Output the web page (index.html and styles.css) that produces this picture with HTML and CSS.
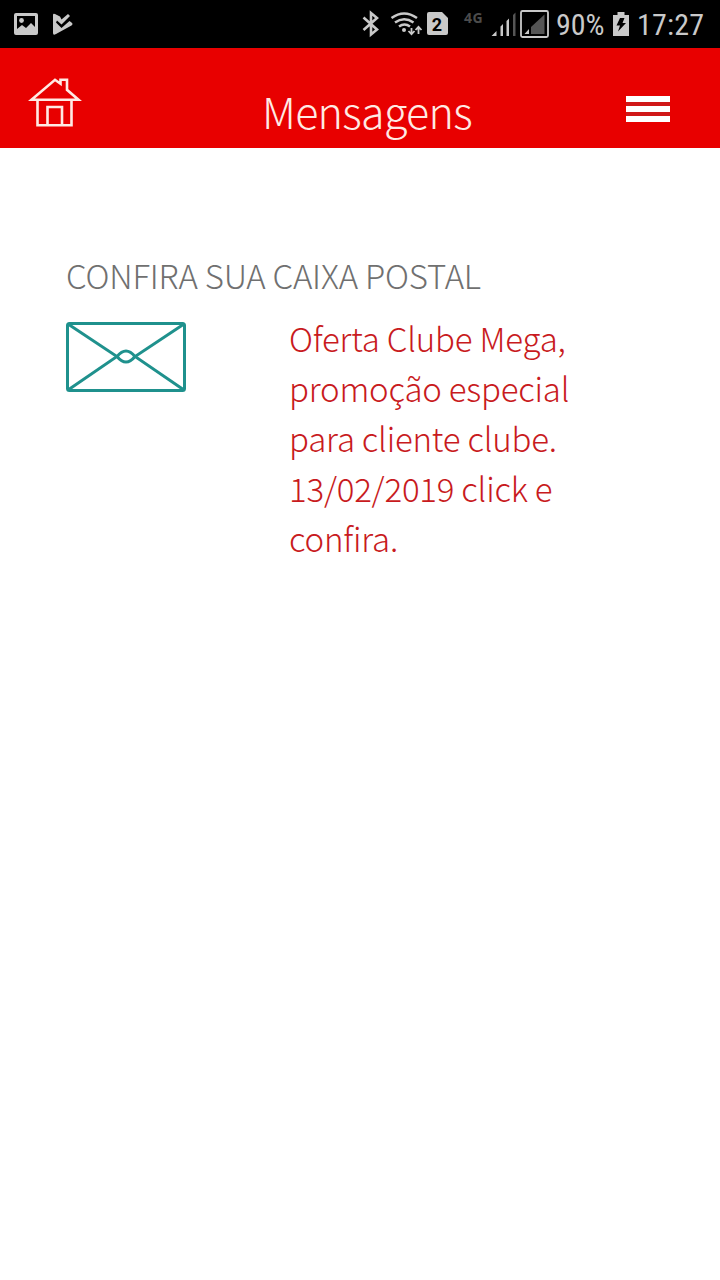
FILE: index.html
```html
<!DOCTYPE html>
<html lang="pt-BR">
<head>
    <meta charset="UTF-8" />
    <meta name="viewport" content="width=device-width, initial-scale=1.0" />
    <title>Mensagens</title>
    <link rel="stylesheet" href="styles.css">
</head>
<body>

<div class="status-bar">
    <svg class="status-left" width="80" height="48" viewBox="0 0 80 48">
        <path fill="#c9c9c9" fill-rule="evenodd" d="M16 13h20q2 0 2 2v18q0 2-2 2H16q-2 0-2-2V15q0-2 2-2zM17 16v13l5-4 4 3 5-5 4 4V16z" />
        <circle cx="21.5" cy="20.5" r="2.4" fill="#c9c9c9" />
        <path fill="#c9c9c9" d="M53 15q0-2 2-1l5 2.500 1.500 3L68 14l2 2-8.500 8.500-4.500-4-1 2 5.500 5.500 8-7 2 1.500q2 1.500 0 3L56 34q-3 2-3-1z" />
    </svg>
    <svg class="status-radio" width="90" height="48" viewBox="360 0 90 48">
        <path fill="none" stroke="#c9c9c9" stroke-width="2.600" d="M363.500 17.500l13.500 12-6 5V13l6 5-13.500 12" />
        <g fill="none" stroke="#c9c9c9" stroke-width="2.500">
            <path d="M391.500 18q12.500-9 25.500 0M395 22.500q9-6.500 18.500 0M399 26.500q5.500-4 11 0" />
            <path stroke-width="1.800" d="M411.500 28v6m-3-3l3 3.200 3-3.200M418.500 34v-7m-3 3l3-3.200 3 3.200" />
        </g>
        <circle cx="404" cy="30" r="2" fill="#c9c9c9" />
        <path fill="#c9c9c9" d="M429 12h13l6 6v15q0 2-2 2h-17q-2 0-2-2V14q0-2 2-2z" />
        <text class="sim-number" x="437" y="31" text-anchor="middle">2</text>
    </svg>
    <span class="network">4G</span>
    <svg class="status-signal" width="60" height="48" viewBox="490 0 60 48">
        <path fill="#c9c9c9" d="M491.500 36l5-5v5zM500.500 26.500l2.500-2.500v12h-2.500zM506.500 21l2.500-2.500V36h-2.500z" />
        <path fill="#555" d="M513 15l2.500-2.500V36H513z" />
        <rect x="521" y="11" width="27" height="26" rx="1.500" fill="none" stroke="#c9c9c9" stroke-width="1.800" />
        <path fill="#555" d="M544.500 14.500V34H531v-7z" />
        <path fill="#c9c9c9" d="M524.500 34l4.500-5v5z" />
    </svg>
    <span class="battery-level">90%</span>
    <svg class="battery" width="16" height="48" viewBox="613 0 16 48">
        <path fill="#c9c9c9" d="M617.500 12h7v3h4.500v21h-16V15h4.500z" />
        <path fill="#000" d="M620 18h4.500l-2 5h3.500l-8 8.500 2-6H616.500z" />
    </svg>
    <span class="clock">17:27</span>
</div>

<div class="header">
    <svg class="home" width="54" height="54" viewBox="0 0 54 54" fill="none" stroke="#ffeae4" stroke-width="2.600">
        <path d="M3.500 21.800L27 1.800l5.500 4V1.800H39v10L50.500 21.800zM9.500 22.500v24.800h34V22.500M19.500 47V29h14.500v18" />
    </svg>
    <h1>Mensagens</h1>
    <div class="menu">
        <span></span>
        <span></span>
        <span></span>
    </div>
</div>

<div class="content">
    <h2>CONFIRA SUA CAIXA POSTAL</h2>
    <div class="message">
        <svg class="envelope" width="120" height="70" viewBox="0 0 120 70" fill="none" stroke="#1f918d" stroke-width="3">
            <rect x="1.500" y="1.500" width="117" height="67" rx="2" />
            <path d="M2 2l49 32.500q9 11 18 0L118 2M2 68l49-33.500q9-11 18 0l49 33.500" />
        </svg>
        <p>Oferta Clube Mega, promoção especial para cliente clube. 13/02/2019 click e confira.</p>
    </div>
</div>

</body>
</html>
```

FILE: styles.css
```css
body {
    font-family: 'Noto Sans CJK SC', 'Open Sans', sans-serif;
    font-weight: 300;
    background: #ffffff;
    margin: 0;
}

svg {
    display: block;
    flex: none;
}

/* Status Bar */
.status-bar {
    display: flex;
    height: 48px;
    background: #000000;
    color: #c9c9c9;
    font-family: Roboto, sans-serif;
    font-weight: 400;
    line-height: 50px;
    white-space: nowrap;
}

.status-radio {
    margin-left: 280px;
}

.sim-number {
    font: bold 18px Roboto, sans-serif;
    fill: #000000;
}

.network {
    width: 26px;
    margin-left: 14px;
    color: #4c4c4c;
    font: bold 14px/35px 'Noto Sans', sans-serif;
    letter-spacing: 0.5px;
}

.battery-level {
    width: 57px;
    margin-left: 6px;
    font-size: 30px;
    font-stretch: 85%;
}

.clock {
    margin-left: 8px;
    font-size: 30px;
    font-stretch: 85%;
    letter-spacing: 0.2px;
}

/* Header */
.header {
    display: flex;
    height: 100px;
    background: #e80000;
}

.home {
    margin: 30px 0 0 28px;
}

h1 {
    width: 364px;
    margin: 14px 0 0 180px;
    color: #ffeae4;
    font-size: 43px;
    font-weight: 300;
    letter-spacing: -0.7px;
    line-height: 96px;
}

.menu {
    display: flex;
    flex-direction: column;
    align-self: flex-start;
    gap: 4px;
    width: 44px;
    margin-top: 48px;
    background: #d01818;
}

.menu span {
    height: 6px;
    background: #ffffff;
}

/* Messages */
.content {
    padding: 102px 66px 0;
}

h2 {
    margin: 0;
    color: #707070;
    font-size: 33px;
    font-weight: 300;
    letter-spacing: -0.2px;
    line-height: 50px;
}

.message {
    display: flex;
    margin-top: 13px;
}

.envelope {
    margin-top: 9px;
}

p {
    width: 300px;
    margin: 0 0 0 103px;
    color: #c81a20;
    font-size: 33px;
    letter-spacing: -0.2px;
    line-height: 50px;
}
```
